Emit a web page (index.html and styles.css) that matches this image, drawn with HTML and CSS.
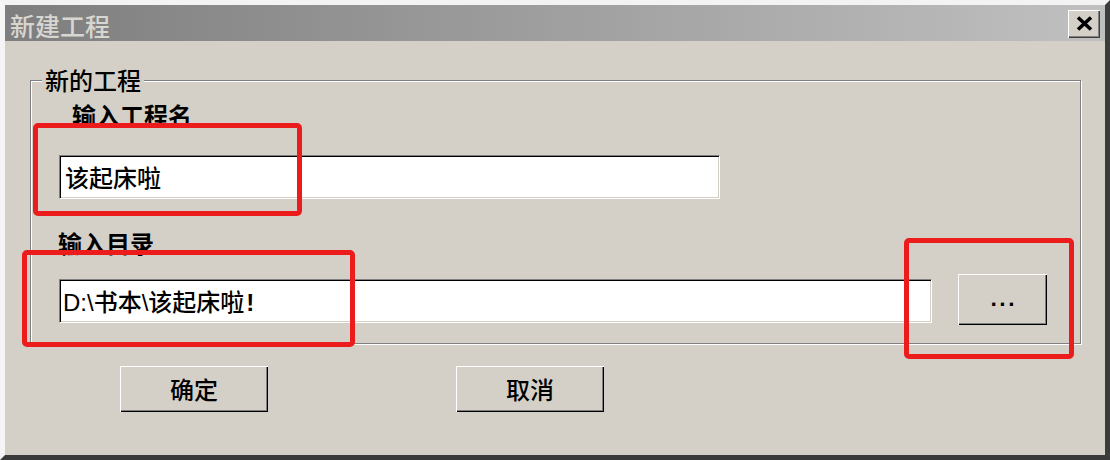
FILE: index.html
```html
<!DOCTYPE html>
<html lang="zh-CN">
<head>
<meta charset="utf-8">
<title>新建工程</title>
<link rel="stylesheet" href="styles.css">
</head>
<body>
<div class="window">
  <div class="titlebar">
    <span class="title">新建工程</span>
    <button class="close-btn" aria-label="关闭">
      <svg width="17" height="15" viewBox="0 0 17 15"><path d="M2 1.5 L15 13.5 M15 1.5 L2 13.5" stroke="#000" stroke-width="3.6" fill="none"/></svg>
    </button>
  </div>
  <div class="client">
    <fieldset class="group">
      <legend class="group-legend">新的工程</legend>
      <div class="label label-name">输入工程名</div>
      <div class="field field-name">该起床啦</div>
      <div class="label label-dir">输入目录</div>
      <div class="dir-row">
        <div class="field field-dir"><span class="latin">D:\</span>书本<span class="latin">\</span>该起床啦<span class="latin bang">!</span></div>
        <button class="btn btn-browse">...</button>
      </div>
    </fieldset>
    <div class="actions">
      <button class="btn btn-ok">确定</button>
      <button class="btn btn-cancel">取消</button>
    </div>
  </div>
  <div class="mark mark-1"></div>
  <div class="mark mark-2"></div>
  <div class="mark mark-3"></div>
</div>
</body>
</html>
```

FILE: styles.css
```css
* { box-sizing: border-box; }
html, body { margin: 0; padding: 0; }
body {
  width: 1110px;
  height: 460px;
  overflow: hidden;
  background: #d4d0c8;
  font-family: "Noto Sans CJK SC", "Liberation Sans", sans-serif;
  color: #000;
}
.window {
  position: relative;
  width: 1110px;
  height: 460px;
  background: #d4d0c8;
  border-top: 5px solid #f3f3f3;
  border-left: 5px solid #f5f5f5;
  border-right: 5px solid #3c3c3c;
  border-bottom: 5px solid #3a3a3a;
  display: flex;
  flex-direction: column;
}
.titlebar {
  height: 36px;
  flex: none;
  display: flex;
  align-items: center;
  justify-content: space-between;
  padding: 0 5px 0 5px;
  background: linear-gradient(to right, #7e7e7e, #c0c0c0);
}
.title {
  font-size: 25px;
  line-height: 36px;
  font-weight: 500;
  color: #d8d6d0;
  padding-top: 3px;
}
.close-btn {
  width: 32px;
  height: 28px;
  padding: 0;
  margin-top: 1px;
  border: none;
  background: #d4d0c8;
  box-shadow: inset 1px 1px 0 #fff, inset -1px -1px 0 #404040, inset -2px -2px 0 #808080;
  display: flex;
  align-items: center;
  justify-content: center;
}
.close-btn svg { display: block; }
.client {
  flex: 1;
  padding: 24px 24px 0 25px;
}
.group {
  margin: 0;
  padding: 0 0 18px 0;
  min-width: 0;
  border: 1px solid #808080;
  box-shadow: 1px 1px 0 #fff, inset 1px 1px 0 #fff;
}
.group-legend {
  margin-left: 11px;
  padding: 0 3px;
  font-size: 24px;
  line-height: 30px;
  font-weight: 500;
  background: #d4d0c8;
}
.label {
  font-size: 24px;
  line-height: 30px;
  font-weight: 700;
}
.label-name { margin: 5px 0 0 41px; }
.label-dir { margin: 29px 0 0 27px; }
.field {
  height: 44px;
  background: #fff;
  border-top: 1px solid #808080;
  border-left: 1px solid #808080;
  border-right: 1px solid #fff;
  border-bottom: 1px solid #fff;
  box-shadow: inset 1px 1px 0 #000, inset -1px -1px 0 #d4d0c8;
  font-size: 24px;
  line-height: 42px;
  font-weight: 500;
  padding-left: 5px;
  white-space: nowrap;
}
.field-name {
  margin: 25px 0 0 28px;
  width: 661px;
}
.dir-row {
  display: flex;
  align-items: flex-start;
  margin-top: 16px;
}
.field-dir {
  margin: 5px 0 0 28px;
  width: 873px;
  padding-left: 3px;
}
.latin { font-family: "Liberation Sans", "DejaVu Sans", sans-serif; font-weight: 400; }
.bang { font-weight: 700; margin-left: 2px; }
.btn {
  padding: 0;
  border: none;
  background: #d4d0c8;
  color: #000;
  font-family: "Noto Sans CJK SC", "Liberation Sans", sans-serif;
  font-size: 24px;
  font-weight: 500;
  box-shadow: inset 1px 1px 0 #fff, inset -1px -1px 0 #000, inset -2px -2px 0 #808080;
}
.btn-browse {
  margin-left: 26px;
  width: 89px;
  height: 51px;
  font-family: "DejaVu Sans", "Liberation Sans", sans-serif;
  font-weight: 700;
  font-size: 18px;
  letter-spacing: 2px;
  text-indent: 2px;
  line-height: 51px;
}
.actions {
  display: flex;
  margin-top: 22px;
}
.btn-ok, .btn-cancel {
  width: 148px;
  height: 46px;
  line-height: 44px;
}
.btn-ok { margin-left: 90px; }
.btn-cancel { margin-left: 188px; }
.mark {
  position: absolute;
  border: 5px solid #ec1c1c;
  border-radius: 5px;
}
.mark-1 { left: 28px; top: 118px; width: 269px; height: 93px; }
.mark-2 { left: 17px; top: 245px; width: 333px; height: 97px; }
.mark-3 { left: 899px; top: 233px; width: 170px; height: 121px; }
```
